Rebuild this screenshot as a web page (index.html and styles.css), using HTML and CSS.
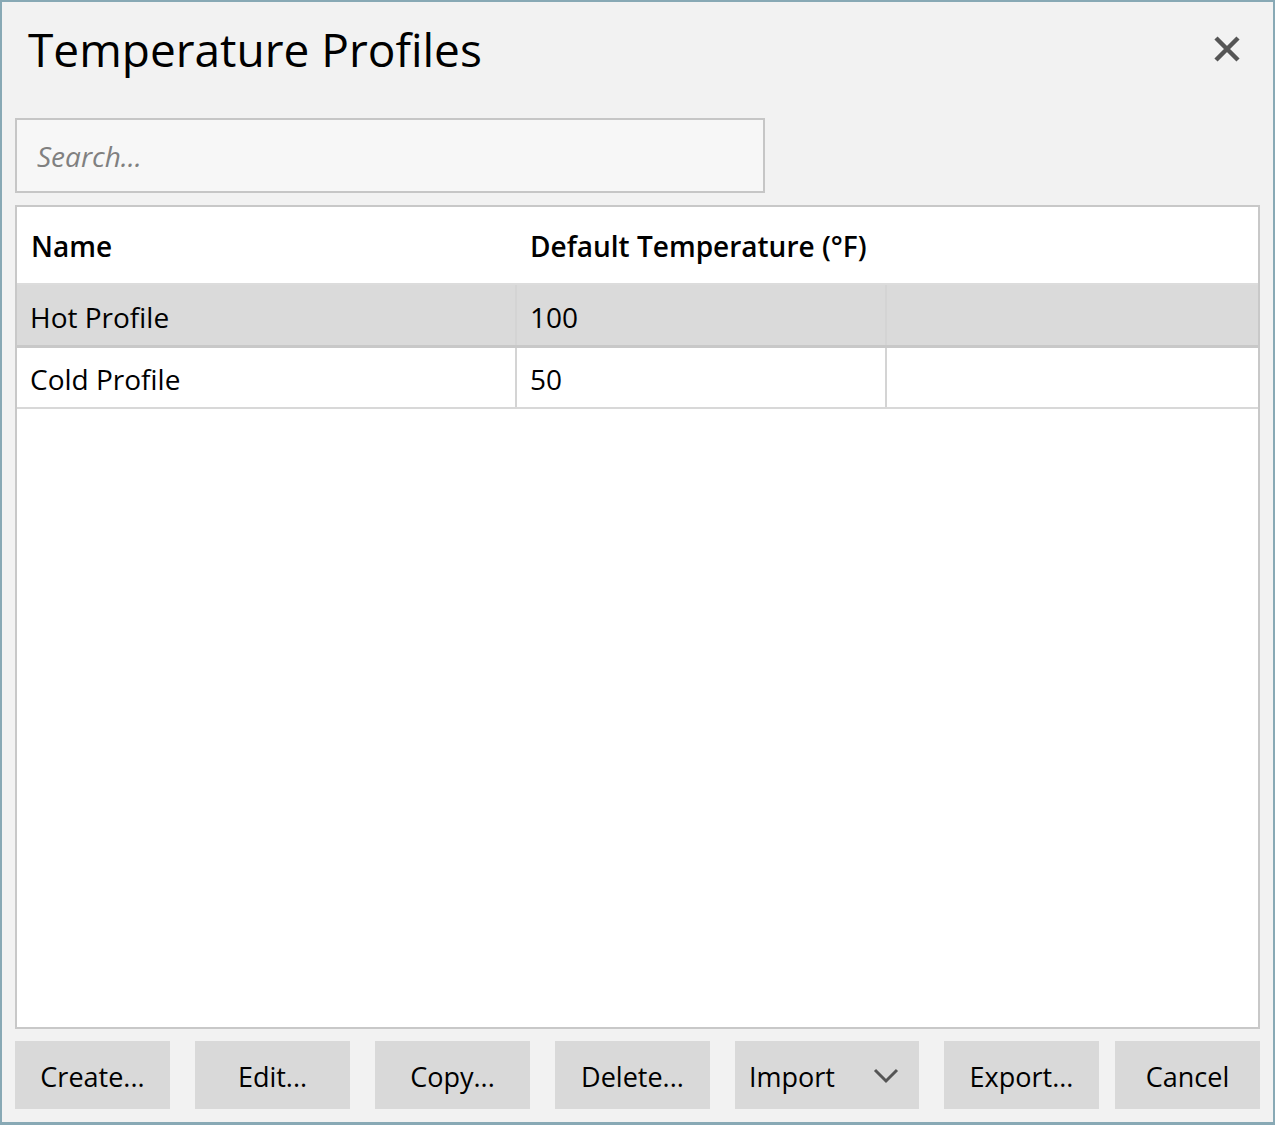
FILE: index.html
```html
<!DOCTYPE html>
<html lang="en">
<head>
  <meta charset="UTF-8" />
  <meta name="viewport" content="width=device-width, initial-scale=1.0"/>
  <title>Temperature Profiles</title>
  <link rel="stylesheet" href="styles.css">
</head>
<body>

  <div class="window">
    <div class="title-bar">
      <h1>Temperature Profiles</h1>
      <span class="close-btn" title="Close">
        <svg width="26" height="26" viewBox="0 0 26 26">
          <path d="M2 2 L24 24 M24 2 L2 24" stroke="#555" stroke-width="4.5" fill="none"/>
        </svg>
      </span>
    </div>

    <input type="text" class="search" placeholder="Search...">

    <div class="grid-box">
      <table class="profiles">
        <thead>
          <tr>
            <th class="col-name">Name</th>
            <th class="col-temp">Default Temperature (°F)</th>
            <th class="col-rest"></th>
          </tr>
        </thead>
        <tbody>
          <tr class="selected">
            <td>Hot Profile</td>
            <td>100</td>
            <td></td>
          </tr>
          <tr>
            <td>Cold Profile</td>
            <td>50</td>
            <td></td>
          </tr>
        </tbody>
      </table>
    </div>

    <div class="buttons">
      <div class="btn-group">
        <button>Create...</button>
        <button>Edit...</button>
        <button>Copy...</button>
        <button>Delete...</button>
        <button class="btn-import">
          <span>Import</span>
          <svg width="28" height="18" viewBox="0 0 28 18">
            <path d="M3 3 L14 14 L25 3" stroke="#555" stroke-width="3" fill="none"/>
          </svg>
        </button>
        <button>Export...</button>
      </div>
      <button class="btn-cancel">Cancel</button>
    </div>
  </div>

</body>
</html>
```

FILE: styles.css
```css
* {
  margin: 0;
  padding: 0;
  box-sizing: border-box;
  font-family: 'Open Sans', 'Noto Sans', sans-serif;
}

html, body {
  height: 100%;
}

body {
  background: #f2f2f2;
}

.window {
  height: 1125px;
  border: 2px solid #88a9b5;
  border-bottom-width: 3px;
  background: #f2f2f2;
  display: flex;
  flex-direction: column;
  padding: 0 13px 13px 13px;
}

.title-bar {
  height: 116px;
  display: flex;
  justify-content: space-between;
  padding: 15px 20px 0 13px;
}

h1 {
  font-size: 46px;
  font-weight: normal;
  color: #000;
  line-height: 64px;
}

.close-btn {
  margin-top: 19px;
  cursor: pointer;
}

.search {
  width: 750px;
  height: 75px;
  border: 2px solid #c6c6c6;
  background: #f7f7f7;
  padding: 0 20px;
  font-size: 28px;
  outline: none;
}

.search::placeholder {
  font-style: italic;
  color: #808080;
}

.grid-box {
  flex: 1;
  margin-top: 12px;
  border: 2px solid #c8c8c8;
  background: #fff;
}

.profiles {
  width: 100%;
  border-collapse: collapse;
  font-size: 28px;
}

.profiles th {
  height: 77px;
  text-align: left;
  font-weight: 600;
  padding: 2px 14px 0 14px;
  border-bottom: 2px solid #dcdcdc;
}

.col-name {
  width: 499px;
}

.col-temp {
  width: 370px;
}

.profiles td {
  height: 62px;
  padding: 4px 13px 0 13px;
  border-left: 2px solid #d4d4d4;
  border-bottom: 2px solid #d8d8d8;
}

.profiles td:first-child {
  border-left: none;
}

.selected td {
  background: #dadada;
  border-bottom: 3px solid #c8c8c8;
}

.buttons {
  display: flex;
  justify-content: space-between;
  margin-top: 12px;
}

.btn-group {
  display: flex;
  gap: 25px;
}

button {
  flex-shrink: 0;
  width: 155px;
  height: 68px;
  border: none;
  background: #d9d9d9;
  font-size: 27px;
  color: #000;
  padding-top: 2px;
  cursor: pointer;
}

.btn-import {
  width: 184px;
  display: flex;
  align-items: center;
  justify-content: space-between;
  padding: 2px 19px 0 14px;
}

.btn-import svg {
  margin-top: 0;
}

.btn-cancel {
  width: 145px;
}
```
